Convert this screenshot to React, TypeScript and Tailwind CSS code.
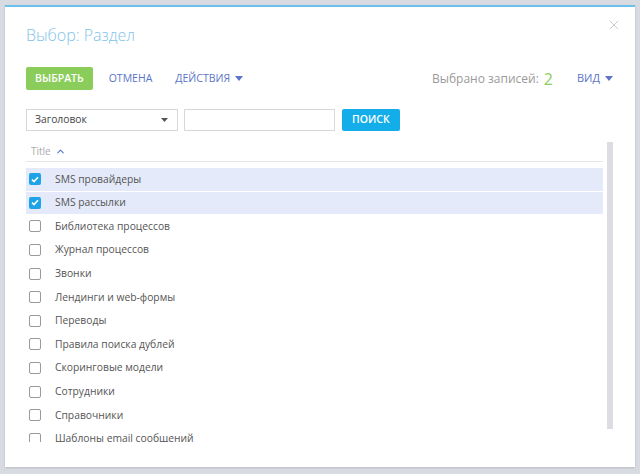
import { ChevronUp, X } from "lucide-react";

type Row = {
  id: number;
  title: string;
  checked: boolean;
};

const rows: Row[] = [
  { id: 1, title: "SMS провайдеры", checked: true },
  { id: 2, title: "SMS рассылки", checked: true },
  { id: 3, title: "Библиотека процессов", checked: false },
  { id: 4, title: "Журнал процессов", checked: false },
  { id: 5, title: "Звонки", checked: false },
  { id: 6, title: "Лендинги и web-формы", checked: false },
  { id: 7, title: "Переводы", checked: false },
  { id: 8, title: "Правила поиска дублей", checked: false },
  { id: 9, title: "Скоринговые модели", checked: false },
  { id: 10, title: "Сотрудники", checked: false },
  { id: 11, title: "Справочники", checked: false },
  { id: 12, title: "Шаблоны email сообщений", checked: false },
];

const Caret = () => (
  <svg width="8" height="5" viewBox="0 0 8 5" className="ml-[5px]">
    <path d="M0 0h8L4 5z" fill="currentColor" />
  </svg>
);

const Checkbox = ({ checked }: { checked: boolean }) =>
  checked ? (
    <span className="flex h-[12px] w-[12px] items-center justify-center rounded-[2px] bg-[#1ea4e6]">
      <svg width="8" height="7" viewBox="0 0 8 7">
        <path d="M1 3.6 3 5.5 7 1.2" stroke="white" strokeWidth="1.6" fill="none" />
      </svg>
    </span>
  ) : (
    <span className="h-[12px] w-[12px] rounded-[2px] border-[1.5px] border-[#9a9a9a] bg-white" />
  );

const App = () => {
  const renderRow = (item: Row) => (
    <div
      key={item.id}
      className={`mb-px flex h-[22.6px] shrink-0 items-center ${item.checked ? "bg-[#e4eaf9]" : ""}`}
    >
      <div className="flex w-[29px] shrink-0 pl-[3px]">
        <Checkbox checked={item.checked} />
      </div>
      <span className="text-[10.3px] text-[#555]">{item.title}</span>
    </div>
  );

  return (
    <div className="h-[474px] w-[640px] bg-[#d9dbe3] p-[5px] font-['Open_Sans',sans-serif]">
      <div className="relative flex h-[462px] w-[630px] flex-col border-t-2 border-[#6ec0ec] bg-white pl-[21px] pr-[22px] shadow-[0_1px_2px_rgba(0,0,0,0.15)]">
        {/* close */}
        <button className="absolute right-[13px] top-[10px] text-[#c4c4c4]">
          <X size={16} strokeWidth={1.3} />
        </button>

        {/* HEADER */}
        <h1 className="mt-[16px] text-[16px] font-light leading-[24px] text-[#7fc3ea]">Выбор: Раздел</h1>

        {/* TOOLBAR */}
        <div className="mt-[20px] flex h-[23px] items-center">
          <button className="h-[23px] rounded-[2px] bg-[#8bcd5b] px-[9px] text-[10.5px] font-semibold text-white">
            ВЫБРАТЬ
          </button>
          <button className="ml-[16px] text-[10.5px] font-medium text-[#5a74c8]">ОТМЕНА</button>
          <button className="ml-[23px] flex items-center text-[10.5px] font-medium text-[#5a74c8]">
            ДЕЙСТВИЯ
            <Caret />
          </button>
          <div className="ml-auto flex items-center text-[12px] text-[#9a9a9a]">
            Выбрано записей:
            <span className="ml-[5px] text-[16px] leading-[16px] text-[#8bcd5b]">2</span>
          </div>
          <button className="ml-[24px] flex items-center text-[11px] font-medium text-[#5a74c8]">
            ВИД
            <Caret />
          </button>
        </div>

        {/* FILTER */}
        <div className="mt-[19px] flex h-[22px] items-center">
          <div className="flex h-[22px] w-[152px] items-center justify-between border border-[#d8d8d8] pl-[8px] pr-[9px] text-[10.3px] text-[#444]">
            Заголовок
            <svg width="7" height="4" viewBox="0 0 7 4">
              <path d="M0 0h7L3.5 4z" fill="#555" />
            </svg>
          </div>
          <div className="ml-[6px] h-[22px] w-[151px] border border-[#d8d8d8]" />
          <button className="ml-[7px] h-[22px] rounded-[2px] bg-[#13aeea] px-[10px] text-[10.5px] font-semibold text-white">
            ПОИСК
          </button>
        </div>

        {/* LIST */}
        <div className="mt-[11px] flex">
          <div className="flex h-[300px] flex-1 flex-col overflow-hidden">
            <div className="flex h-[20px] shrink-0 items-center border-b border-[#e6e6e6] pl-[5px] text-[10px] text-[#aaa]">
              Title
              <ChevronUp size={11} strokeWidth={2.2} className="ml-[4px] text-[#4d6fd0]" />
            </div>
            <div className="mt-[6px] flex flex-col">{rows.map(renderRow)}</div>
          </div>
          <div className="ml-[4px] h-[287px] w-[6px] bg-[#dcdce2]" />
        </div>
      </div>
    </div>
  );
};

export default App;
